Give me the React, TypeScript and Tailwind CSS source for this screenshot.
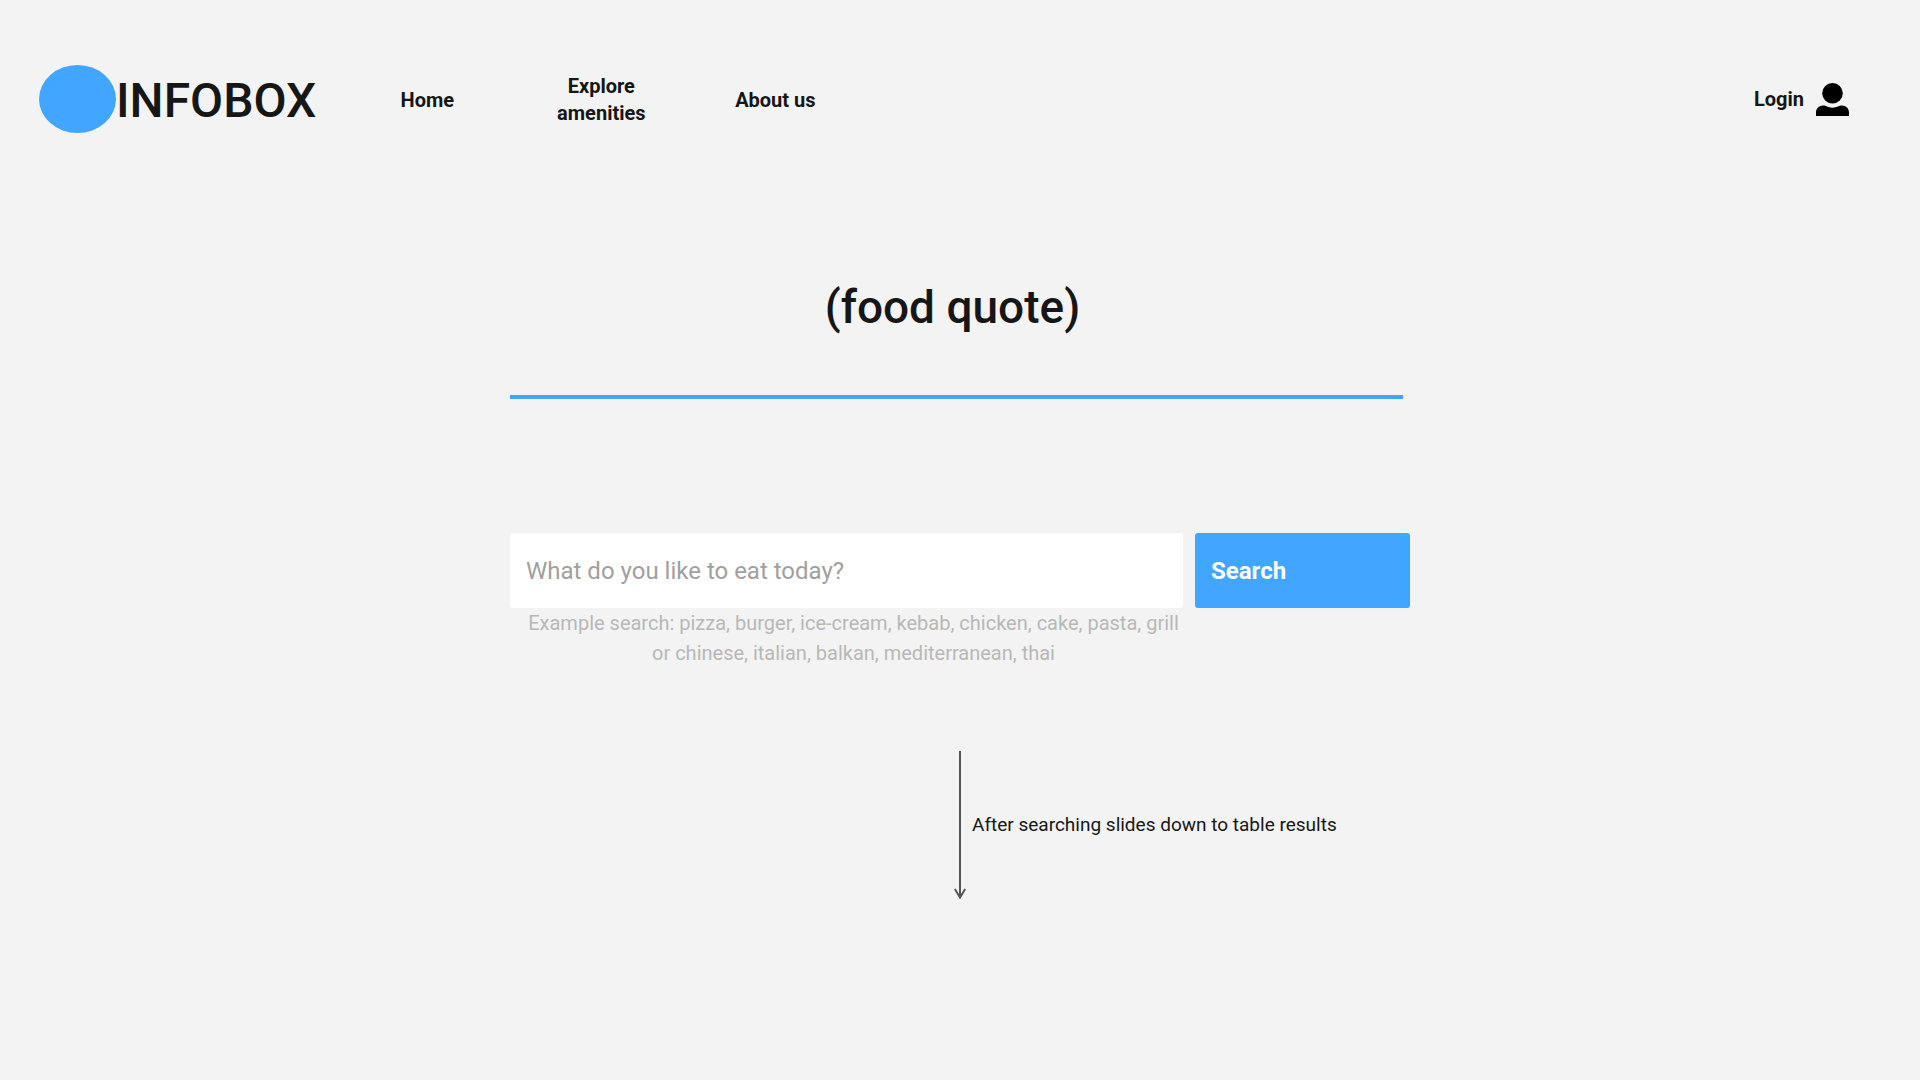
import { useState } from "react";

const navLinks = ["Home", "Explore amenities", "About us"];

function UserIcon() {
  return (
    <svg viewBox="0 0 33 33" className="h-[33px] w-[33px] shrink-0" fill="#000" aria-hidden="true">
      <circle cx="16.5" cy="10.3" r="10.3" />
      <path d="M0 33V29.5C0 25.500 3 22.600 7 22.600C10.300 22.600 12 24.700 16.500 24.700C21 24.700 22.700 22.600 26 22.600C30 22.600 33 25.500 33 29.500V33Z" />
    </svg>
  );
}

function DownArrow() {
  return (
    <svg viewBox="0 0 12 148" className="h-[148px] w-3 shrink-0" fill="none" stroke="#555" strokeWidth="2" aria-hidden="true">
      <path d="M6 0V146" />
      <path d="M0.800 138L6 146.500L11.200 138" />
    </svg>
  );
}

function Header() {
  return (
    <header className="flex items-center pt-[65px] pr-[71px] pl-[39px]">
      <a href="#" className="flex items-center text-5xl leading-[68px] font-medium">
        <span className="h-[68px] w-[77px] rounded-[50%] bg-[#40a6ff]" />
        <span className="pt-1 leading-[64px]">INFOBOX</span>
      </a>
      <nav aria-label="Main" className="ml-6 flex items-center pt-[2px]">
        {navLinks.map((label) => (
          <a key={label} href="#" className="mx-10 w-[94px] text-center text-xl leading-[27px] font-bold">
            {label}
          </a>
        ))}
      </nav>
      <a href="#" className="ml-auto flex items-center gap-3 text-xl leading-[27px] font-bold">
        Login
        <UserIcon />
      </a>
    </header>
  );
}

export default function App() {
  const [query, setQuery] = useState("");

  return (
    <div className="min-h-screen bg-[#f3f3f3] font-['Roboto',sans-serif] text-[#161616]">
      <Header />
      <main className="mx-auto max-w-[900px] pt-[142px]">
        <div className="mr-[7px] border-b-4 border-[#40a6ff] pb-14">
          <h1 className="pr-2 text-center text-[46px] leading-[64px] font-medium">(food quote)</h1>
        </div>
        <form
          className="mt-[134px] grid grid-cols-[673fr_215fr] gap-x-3"
          onSubmit={(event) => event.preventDefault()}
        >
          <input
            type="search"
            aria-label="What do you like to eat today?"
            aria-describedby="search-hint"
            placeholder="What do you like to eat today?"
            value={query}
            onChange={(event) => setQuery(event.target.value)}
            className="h-[75px] rounded-[3px] bg-white px-4 text-2xl placeholder:text-[#a0a0a0]"
          />
          <button type="submit" className="rounded-[3px] bg-[#40a6ff] px-4 text-left text-2xl font-bold text-white">
            Search
          </button>
          <p id="search-hint" className="pl-[14px] text-center text-xl leading-[30px] text-[#b8b8b8]">
            Example search: pizza, burger, ice-cream, kebab, chicken, cake, pasta, grill
            <br />
            or chinese, italian, balkan, mediterranean, thai
          </p>
        </form>
        <div className="mt-[83px] grid grid-cols-[1fr_12px_1fr] items-center gap-x-[6px]">
          <div className="col-start-2">
            <DownArrow />
          </div>
          <p className="text-[19px] whitespace-nowrap">After searching slides down to table results</p>
        </div>
      </main>
    </div>
  );
}
